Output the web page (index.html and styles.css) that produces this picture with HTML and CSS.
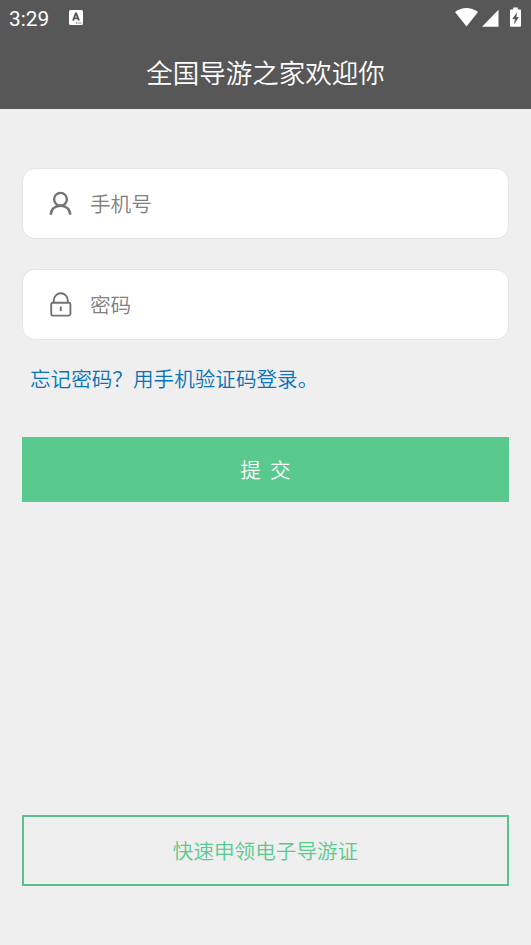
FILE: index.html
```html
<!DOCTYPE html>
<html lang="zh-CN">
<head>
<meta charset="utf-8">
<title>全国导游之家</title>
<link rel="stylesheet" href="styles.css">
</head>
<body>
<header class="header">
  <div class="status">
    <span class="time">3:29</span>
    <svg class="app-icon" width="14" height="15" viewBox="0 0 14 15"><rect width="14" height="15" rx="1.5" fill="#fff"/><path d="M4 10.5 6.8 3.5h.4L10 10.5M5 8.4h4" fill="none" stroke="#575757" stroke-width="1.9"/><path d="M7 13h1.3M9.3 13h1.3M11.5 13h1.2" stroke="#575757"/></svg>
    <svg class="system-icons" width="68" height="22" viewBox="0 0 68 22" fill="#fff">
      <path d="M0 5Q11.500-3.200 23 5L11.500 19.500Z"/>
      <path d="M27 19.800 43.500 2.800v17Z"/>
      <path d="M58.200.5h4.600v2H65q1 0 1 1v15.200q0 1-1 1h-9q-1 0-1-1V3.500q0-1 1-1h2.200Z"/>
      <path d="M62.200 5 57.300 12h2.600l-.9 5.500 4.900-7.500h-2.600Z" fill="#575757"/>
    </svg>
  </div>
  <h1 class="title">全国导游之家欢迎你</h1>
</header>
<main class="content">
  <div class="field">
    <svg class="field-icon" width="24" height="26" viewBox="0 0 24 26"><circle cx="11.500" cy="9.300" r="6.400"/><path d="M1.800 24.700C1.800 19.200 6 15.700 11.500 15.700s9.700 3.500 9.700 9"/></svg>
    <input class="input" type="tel" placeholder="手机号">
  </div>
  <div class="field">
    <svg class="field-icon lock" width="24" height="26" viewBox="0 0 24 26"><rect x="2.200" y="11.800" width="19.200" height="12.800" rx="1.500"/><path d="M4.800 11.800V9.300a7 7 0 0 1 14 0v2.500M11.800 15.500v4.500"/></svg>
    <input class="input" type="password" placeholder="密码">
  </div>
  <a class="link">忘记密码？用手机验证码登录。</a>
  <button class="submit">提&nbsp; 交</button>
  <button class="apply">快速申领电子导游证</button>
</main>
</body>
</html>
```
FILE: styles.css
```css
* { box-sizing: border-box; }
body {
  margin: 0;
  height: 945px;
  display: flex;
  flex-direction: column;
  background: #efefef;
  font-family: "Noto Sans CJK SC DemiLight", "Noto Sans CJK SC", sans-serif;
  font-size: 20.6px;
  font-weight: 400;
}
.header { height: 109px; background: #575757; color: #fff; }
.status { height: 36px; padding: 0 9px; display: flex; align-items: center; }
.time { font: 400 20.8px/36px Roboto, sans-serif; width: 60px; padding-top: 1px; }
.app-icon { margin-bottom: 1px; }
.system-icons { margin: 0 0 0 auto; overflow: visible; position: relative; left: 1px; }
.title { margin: 0; font-size: 26.5px; font-weight: 350; line-height: 71px; text-align: center; }
.content { flex: 1; display: flex; flex-direction: column; padding: 59px 22px; font-weight: 350; }
.field {
  height: 71px;
  margin-bottom: 30px;
  padding: 0 0 2px 25.5px;
  display: flex;
  align-items: center;
  gap: 17.5px;
  background: #fff;
  border: 1px solid #e4e4e4;
  border-radius: 13px;
}
.field-icon { fill: none; stroke: #737373; stroke-width: 2.4; }
.lock { stroke-width: 1.9; }
.input { flex: 1; border: 0; padding: 0; outline: 0; background: none; font: inherit; height: 40px; }
.input::placeholder { color: #808080; }
.link { margin: -8px 0 0 8px; line-height: 32px; height: 32px; color: #0873bb; }
.submit, .apply { font: inherit; padding: 0 0 2px; flex: none; }
.submit { margin-top: 43px; height: 65px; border: 0; background: #59c98d; color: #fff; }
.apply { margin-top: auto; height: 71px; border: 2px solid #59c18f; background: none; color: #59c98d; }
```
